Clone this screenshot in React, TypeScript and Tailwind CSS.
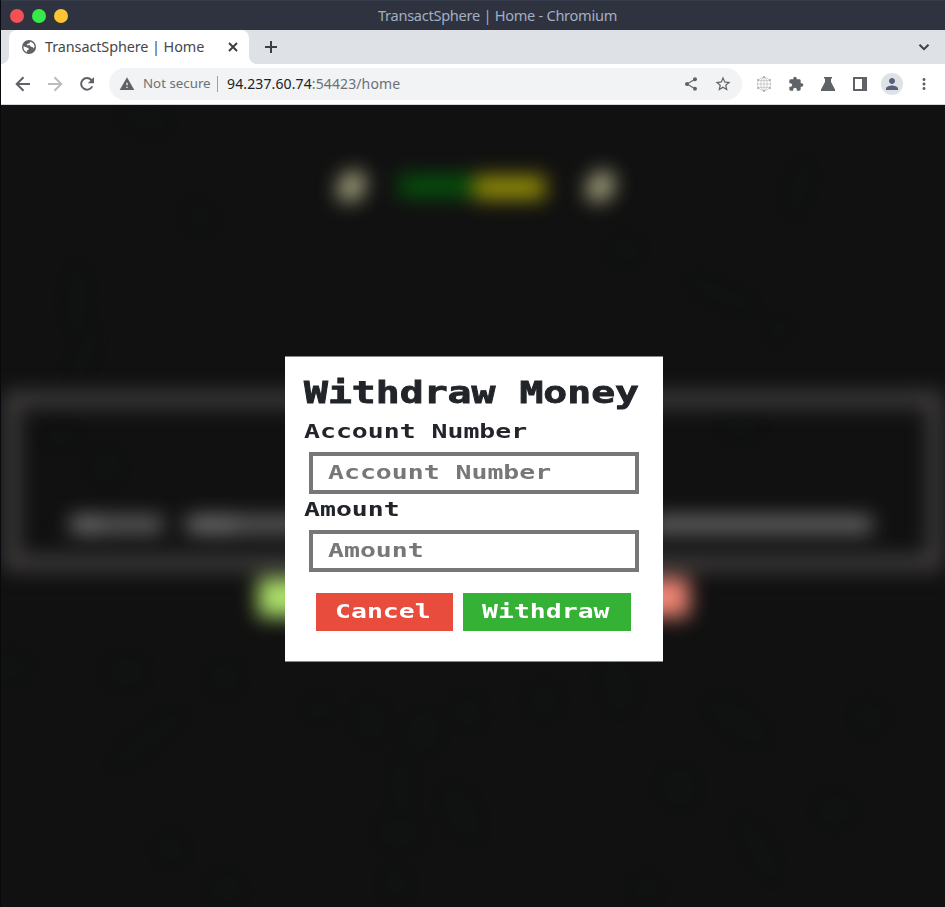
import React from "react";
import { MdWarning, MdShare, MdStarBorder, MdExtension, MdPerson, MdMoreVert } from "react-icons/md";

function Wide({ children, className }: { children: React.ReactNode; className: string }) {
  return <span className={"block origin-left whitespace-pre font-['DejaVu_Sans_Mono',monospace] font-bold " + className}>{children}</span>;
}

function Line({ d, className }: { d: string; className: string }) {
  return <svg viewBox="0 0 20 20" fill="none" stroke="currentColor" strokeWidth="2" className={"size-5 shrink-0 " + className}><path d={d} /></svg>;
}

function TitleBar() {
  return (
    <div className="flex h-[30px] items-center border-t border-[#353b4b] bg-[#2f333f] pl-[9px]">
      <div className="flex gap-2">
        <span className="size-[14px] rounded-full bg-[#f65057]" />
        <span className="size-[14px] rounded-full bg-[#38ea49]" />
        <span className="size-[14px] rounded-full bg-[#fdc433]" />
      </div>
      <span className="ml-[310px] whitespace-nowrap pb-[2px] text-[14.6px] leading-[26px] tracking-[-0.29px] text-[#a3aec2]">TransactSphere | Home - Chromium</span>
    </div>
  );
}

function Globe() {
  return (
    <svg className="size-[14px]" viewBox="0 0 14 14">
      <circle cx="7" cy="7" r="7" fill="#5f6368" />
      <path d="M8.2 1.7 7.4 3.3 5.2 4 4.7 5.3h3.2l1 1.5 2.1.4.6 1.4.9-1.3A5.5 5.5 0 0 0 8.2 1.7z" fill="#fff" />
      <path d="M1.5 6.2 5 7.4l2 1.3-.8 1.3-1.3.4.2 1.8A5.6 5.6 0 0 1 1.5 6.2z" fill="#fff" />
    </svg>
  );
}

function TabStrip() {
  return (
    <div className="flex h-[34px] items-center bg-[#dee1e6] pl-[8px]">
      <div className="relative flex h-[34px] w-[240px] items-center rounded-t-lg bg-white pl-[13px] pr-[6px]">
        <Globe />
        <span className="ml-[9px] flex-1 whitespace-nowrap text-[14.4px] tracking-[-0.08px] text-[#45474a]">TransactSphere | Home</span>
        <Line className="text-[#3c4043]" d="m6 6 8 8M14 6l-8 8" />
        <svg className="absolute -left-2 bottom-0 size-2" viewBox="0 0 8 8" fill="#fff"><path d="M8 0v8H0a8 8 0 0 0 8-8z" /></svg>
        <svg className="absolute -right-2 bottom-0 size-2" viewBox="0 0 8 8" fill="#fff"><path d="M0 0v8h8a8 8 0 0 1-8-8z" /></svg>
      </div>
      <Line className="ml-[12px] text-[#3c4043]" d="M10 4v12M4 10h12" />
      <Line className="ml-auto mr-[11px] text-[#3c4043]" d="m5.5 7.8 4.5 4.4 4.5-4.4" />
    </div>
  );
}

function Mesh() {
  return (
    <svg className="size-4" viewBox="0 0 16 16" fill="none" stroke="#bcbcbc" strokeWidth=".7">
      <circle cx="8" cy="8" r="6.6" />
      <ellipse cx="8" cy="8" rx="3.2" ry="6.6" />
      <path d="M8 1v14M2.4 4.6h11.2M2.4 11.4h11.2M1 8h14" />
      <g fill="#a5a5a5" stroke="none"><circle cx="8" cy="1" r="1" /><circle cx="8" cy="15" r="1" /><circle cx="2" cy="4" r="1" /><circle cx="14" cy="4" r="1" /><circle cx="2" cy="12" r="1" /><circle cx="14" cy="12" r="1" /></g>
    </svg>
  );
}

function Toolbar() {
  return (
    <div className="flex h-[41px] items-center border-b border-[#d5d7da] bg-white pl-[12px] text-[#5f6368]">
      <Line className="" d="M17 10H4M10.5 3.2 3.7 10l6.8 6.8" />
      <Line className="ml-3 text-[#babcbe]" d="M3 10h13M9.500 3.200 16.300 10l-6.800 6.800" />
      <svg viewBox="0 0 20 20" className="ml-3 size-5" fill="none" stroke="currentColor" strokeWidth="2">
        <path d="M15.200 12.300A5.800 5.800 0 1 1 14.300 6l1.200 1.300" />
        <path d="M17 3v6.200h-6.200z" fill="currentColor" stroke="none" />
      </svg>
      <div className="ml-3 flex h-8 w-[633px] items-center rounded-full bg-[#f1f3f4] pl-[10px] pr-[10px]">
        <MdWarning className="size-4" />
        <span className="ml-2 w-[67px] whitespace-nowrap text-[13.3px] text-[#6c7074]">Not secure</span>
        <span className="ml-[7px] mr-[9px] h-4 w-px bg-[#9aa0a6]" />
        <span className="pb-px text-[14px] tracking-[0.12px] text-[#6c7074]"><span className="text-[#202124]">94.237.60.74</span>:54423/home</span>
        <MdShare className="ml-auto size-4" />
        <MdStarBorder className="ml-[15px] size-[18px]" />
      </div>
      <div className="ml-[14px] flex items-center gap-4">
        <Mesh />
        <MdExtension className="size-4" />
        <svg className="size-4" viewBox="0 0 16 16" fill="currentColor"><path d="M4 1h8v1.5h-1V6l4 7.5V15H1v-1.5L5 6V2.5H4z" /></svg>
        <svg className="size-4" viewBox="0 0 16 16" fill="currentColor"><path fillRule="evenodd" d="M1 1h14v14H1zM3 3v10h7V3z" /></svg>
        <span className="-mx-[3px] flex size-[22px] items-center justify-center rounded-full bg-[#dee1e6]"><MdPerson className="size-[18px] text-[#566078]" /></span>
        <MdMoreVert className="-ml-px size-[18px]" />
      </div>
    </div>
  );
}

const CELLS = [
  [145, 15, 24, 14, 10], [198, 112, 15, 15, 0], [625, 145, 17, 15, 0], [798, 83, 12, 28, 15],
  [76, 195, 14, 34, 0], [83, 250, 12, 30, 20], [722, 190, 36, 12, 25], [777, 224, 12, 12, 0],
  [105, 362, 18, 18, 0], [60, 332, 16, 14, 0], [740, 323, 20, 13, 0], [10, 562, 18, 16, 0],
  [125, 567, 22, 18, 0], [224, 573, 17, 18, 0], [147, 634, 46, 12, -38], [318, 604, 14, 14, 0],
  [370, 616, 18, 22, -20], [467, 608, 16, 18, 0], [422, 627, 20, 24, 20],
  [543, 595, 17, 17, 0], [617, 580, 18, 30, -12], [737, 616, 36, 17, 35],
  [868, 612, 17, 17, 0], [678, 682, 20, 22, 0], [834, 705, 20, 18, 0], [398, 728, 24, 18, 0],
  [400, 682, 13, 30, 0], [460, 708, 18, 30, -30], [170, 745, 16, 15, 0], [225, 784, 18, 18, 0],
  [395, 778, 15, 15, 0], [645, 784, 15, 14, 0], [758, 745, 14, 35, -28],
];

function Backdrop() {
  return (
    <div className="absolute inset-0 overflow-hidden">
      <svg className="absolute inset-0 size-full blur-[3px]" viewBox="0 0 944 802" fill="#101211" stroke="#0e0f0f" strokeWidth="3">
        {CELLS.map(([x, y, rx, ry, a], i) => <ellipse key={i} cx={x} cy={y} rx={rx} ry={ry} transform={`rotate(${a} ${x} ${y})`} />)}
      </svg>
      <div className="absolute inset-0 blur-[10px]">
        <span className="absolute left-[337px] top-[66px] h-[31px] w-[27px] -skew-x-12 rounded-full bg-[#a5a37f]" />
        <span className="absolute left-[398px] top-[70px] h-[22px] w-[74px] bg-[#06520b]" />
        <span className="absolute left-[473px] top-[71px] h-[23px] w-[71px] bg-[#969008]" />
        <span className="absolute left-[586px] top-[66px] h-[31px] w-[27px] -skew-x-12 rounded-full bg-[#a5a37f]" />
        <div className="absolute left-[3px] right-[2px] top-[286px] h-[180px] border-[16px] border-[#403d3d]" />
        <span className="absolute left-[70px] top-[411px] h-[17px] w-[28px] bg-[#777777]" />
        <span className="absolute left-[98px] top-[411px] h-[17px] w-[64px] bg-[#626262]" />
        <span className="absolute left-[186px] top-[411px] h-[17px] w-[48px] bg-[#777777]" />
        <span className="absolute left-[234px] top-[411px] h-[17px] w-[72px] bg-[#606060]" />
        <span className="absolute left-[650px] top-[411px] h-[17px] w-[221px] bg-[#6b6b6b]" />
        <span className="absolute left-[257px] top-[473px] h-[39px] w-[90px] bg-[#acdf6b]" />
        <span className="absolute left-[600px] top-[473px] h-[39px] w-[88px] bg-[#f08674]" />
      </div>
    </div>
  );
}

function Field({ label }: { label: string }) {
  return (
    <label className="block">
      <Wide className="h-[33px] scale-x-[1.38] text-[19.2px] leading-[26px] text-[#212529]">{label}</Wide>
      <span className="ml-[5px] flex h-[42px] w-[330px] items-center border-4 border-[#777777] bg-white pl-[15px]">
        <Wide className="scale-x-[1.38] text-[19.2px] leading-[30px] text-[#777777]">{label}</Wide>
      </span>
    </label>
  );
}

function Dialog() {
  return (
    <div className="relative mt-[251px] h-[306px] w-[378px] border-y border-[#888888] bg-white pl-[19px] pt-[14px]">
      <Wide className="h-[48px] scale-x-[1.325] text-[30px] leading-[43px] text-[#212529] [-webkit-text-stroke:0.8px_#212529]">Withdraw Money</Wide>
      <div className="flex flex-col gap-[3px]">
        <Field label="Account Number" />
        <Field label="Amount" />
      </div>
      <div className="ml-3 mt-[21px] flex gap-[10px]">
        <button className="h-[38px] w-[137px] bg-[#e84c3d] pl-[19px] text-left"><Wide className="scale-x-[1.38] text-[19.2px] leading-[34px] text-white">Cancel</Wide></button>
        <button className="h-[38px] w-[168px] bg-[#35b135] pl-[19px] text-left"><Wide className="scale-x-[1.38] text-[19.2px] leading-[34px] text-white">Withdraw</Wide></button>
      </div>
    </div>
  );
}

export default function App() {
  return (
    <div className="h-[907px] w-[945px] overflow-hidden border-l border-[#080a10] bg-[#111111] font-['Noto_Sans',sans-serif]">
      <TitleBar />
      <TabStrip />
      <Toolbar />
      <main className="relative flex h-[802px] justify-center pl-[2px]">
        <Backdrop />
        <Dialog />
      </main>
    </div>
  );
}
